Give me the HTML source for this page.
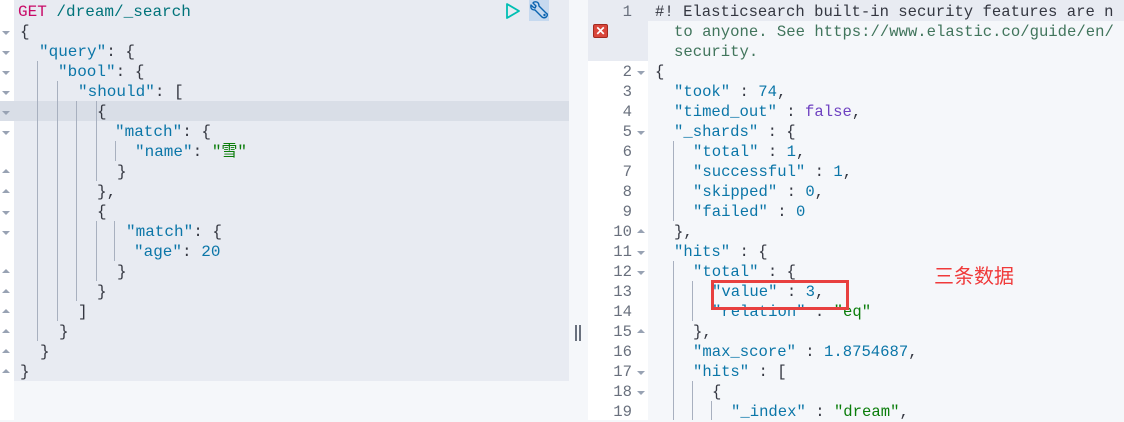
<!DOCTYPE html>
<html><head><meta charset="utf-8"><style>
*{margin:0;padding:0;box-sizing:border-box}
body{width:1124px;height:420px;overflow:hidden;background:#f5f7fa;position:relative;font-family:"Liberation Mono","Noto Sans CJK SC",monospace}
.a{position:absolute;white-space:pre;line-height:20px;height:20px;margin-top:1px}
.L{font-size:16px}
.R{font-size:15.6px}
.k{color:#0b76a8}.s{color:#0a7d0a}.n{color:#0b76a8}.p{color:#343741}.b{color:#6f42c1}
.g{position:absolute;width:1px;background:#a8b0bf}
.ln{position:absolute;left:588px;width:44px;text-align:right;font-size:15.6px;color:#69707d;line-height:20px;margin-top:1px;font-family:"Liberation Mono",monospace}
.tu,.td{position:absolute;width:0;height:0;border-left:4px solid transparent;border-right:4px solid transparent}
.td{border-top:4px solid #98a2b3}.tu{border-bottom:4px solid #98a2b3}
</style></head><body>
<div style="position:absolute;left:0;top:0;width:14px;height:420px;background:#fff"></div>
<div style="position:absolute;left:14px;top:0;width:555px;height:381px;background:#e8ebf2"></div>
<div style="position:absolute;left:0;top:101px;width:569px;height:20px;background:#d9dee7"></div>
<div style="position:absolute;left:529px;top:0;width:20px;height:21px;background:#c6d9ef"></div>
<svg style="position:absolute;left:505px;top:2px" width="16" height="18"><path d="M2 2 L14 9 L2 16 Z" fill="none" stroke="#00bfb3" stroke-width="1.8" stroke-linejoin="round"/></svg>
<svg style="position:absolute;left:530px;top:1px" width="19" height="19" viewBox="0 0 19 19"><path d="M3 2 L6 5 L5 7 L3 6 L1 4 Q0 9 5 9 L12 16 Q15 18 17 15 Q18 13 16 12 L9 5 Q9 0 4 1 Z" fill="none" stroke="#0b64b0" stroke-width="1.4" stroke-linejoin="round"/><circle cx="14.5" cy="14" r="1.2" fill="#0b64b0"/></svg>

<div class="g" style="left:37px;top:61px;height:280px"></div>
<div class="g" style="left:57px;top:81px;height:240px"></div>
<div class="g" style="left:76px;top:101px;height:200px"></div>
<div class="g" style="left:96px;top:101px;height:80px"></div>
<div class="g" style="left:115px;top:141px;height:20px"></div>
<div class="g" style="left:96px;top:221px;height:60px"></div>
<div class="g" style="left:114px;top:221px;height:40px"></div>

<div class="a L" style="left:18px;top:1px"><span style="color:#c80a68">GET</span> <span style="color:#00737a">/dream/_search</span></div>
<div class="a L p" style="left:20px;top:21px">{</div>
<div class="a L" style="left:39px;top:41px"><span class="k">"query"</span><span class="p">: {</span></div>
<div class="a L" style="left:58px;top:61px"><span class="k">"bool"</span><span class="p">: {</span></div>
<div class="a L" style="left:78px;top:81px"><span class="k">"should"</span><span class="p">: [</span></div>
<div class="a L p" style="left:97px;top:101px">{</div>
<div class="a L" style="left:115px;top:121px"><span class="k">"match"</span><span class="p">: {</span></div>
<div class="a L" style="left:135px;top:141px"><span class="k">"name"</span><span class="p">: </span><span class="s">"雪"</span></div>
<div class="a L p" style="left:117px;top:161px">}</div>
<div class="a L p" style="left:97px;top:181px">},</div>
<div class="a L p" style="left:97px;top:201px">{</div>
<div class="a L" style="left:126px;top:221px"><span class="k">"match"</span><span class="p">: {</span></div>
<div class="a L" style="left:134px;top:241px"><span class="k">"age"</span><span class="p">: </span><span class="n">20</span></div>
<div class="a L p" style="left:117px;top:261px">}</div>
<div class="a L p" style="left:97px;top:281px">}</div>
<div class="a L p" style="left:78px;top:301px">]</div>
<div class="a L p" style="left:59px;top:321px">}</div>
<div class="a L p" style="left:40px;top:341px">}</div>
<div class="a L p" style="left:20px;top:361px">}</div>

<div class="td" style="left:2px;top:31px"></div><div class="td" style="left:2px;top:51px"></div><div class="td" style="left:2px;top:71px"></div><div class="td" style="left:2px;top:91px"></div><div class="td" style="left:2px;top:111px"></div><div class="td" style="left:2px;top:131px"></div>
<div class="tu" style="left:2px;top:169px"></div><div class="tu" style="left:2px;top:189px"></div>
<div class="td" style="left:2px;top:211px"></div><div class="td" style="left:2px;top:231px"></div>
<div class="tu" style="left:2px;top:269px"></div><div class="tu" style="left:2px;top:289px"></div><div class="tu" style="left:2px;top:309px"></div><div class="tu" style="left:2px;top:329px"></div><div class="tu" style="left:2px;top:349px"></div><div class="tu" style="left:2px;top:369px"></div>

<div style="position:absolute;left:575px;top:325px;width:2px;height:16px;background:#69707d"></div>
<div style="position:absolute;left:579px;top:325px;width:2px;height:16px;background:#69707d"></div>

<div style="position:absolute;left:588px;top:0;width:60px;height:420px;background:#fff"></div>
<div style="position:absolute;left:588px;top:0;width:60px;height:61px;background:#e8ebf2"></div>
<div style="position:absolute;left:648px;top:0;width:476px;height:21px;background:#e8ebf2"></div>
<div style="position:absolute;left:593px;top:24px;width:15px;height:14px;background:#d9463b;border:1px solid #a32a20;border-radius:2px;color:#fff;font:bold 12px/12px 'Liberation Sans',sans-serif;text-align:center">✕</div>

<div class="ln" style="top:1px">1</div>
<div class="ln" style="top:61px">2</div><div class="ln" style="top:81px">3</div><div class="ln" style="top:101px">4</div><div class="ln" style="top:121px">5</div><div class="ln" style="top:141px">6</div><div class="ln" style="top:161px">7</div><div class="ln" style="top:181px">8</div><div class="ln" style="top:201px">9</div><div class="ln" style="top:221px">10</div><div class="ln" style="top:241px">11</div><div class="ln" style="top:261px">12</div><div class="ln" style="top:281px">13</div><div class="ln" style="top:301px">14</div><div class="ln" style="top:321px">15</div><div class="ln" style="top:341px">16</div><div class="ln" style="top:361px">17</div><div class="ln" style="top:381px">18</div><div class="ln" style="top:401px">19</div>
<div class="td" style="left:637px;top:71px"></div><div class="td" style="left:637px;top:131px"></div><div class="tu" style="left:637px;top:229px"></div><div class="td" style="left:637px;top:251px"></div><div class="td" style="left:637px;top:271px"></div><div class="tu" style="left:637px;top:329px"></div><div class="td" style="left:637px;top:371px"></div><div class="td" style="left:637px;top:391px"></div>

<div class="g" style="left:673px;top:141px;height:80px"></div>
<div class="g" style="left:673px;top:261px;height:159px"></div>
<div class="g" style="left:692px;top:281px;height:40px"></div>
<div class="g" style="left:692px;top:381px;height:39px"></div>
<div class="g" style="left:711px;top:401px;height:19px"></div>

<div style="position:absolute;left:648px;top:0;width:476px;height:61px;overflow:hidden">
<div class="a R" style="left:7px;top:1px;color:#343741">#! Elasticsearch built-in security features are n</div>
<div class="a R" style="left:26px;top:21px;color:#41755c">to anyone. See https://www.elastic.co/guide/en/</div>
<div class="a R" style="left:26px;top:41px;color:#41755c">security.</div>
</div>
<div class="a R p" style="left:655px;top:61px">{</div>
<div class="a R" style="left:674px;top:81px"><span class="k">"took"</span><span class="p"> : </span><span class="n">74</span><span class="p">,</span></div>
<div class="a R" style="left:674px;top:101px"><span class="k">"timed_out"</span><span class="p"> : </span><span class="b">false</span><span class="p">,</span></div>
<div class="a R" style="left:674px;top:121px"><span class="k">"_shards"</span><span class="p"> : {</span></div>
<div class="a R" style="left:693px;top:141px"><span class="k">"total"</span><span class="p"> : </span><span class="n">1</span><span class="p">,</span></div>
<div class="a R" style="left:693px;top:161px"><span class="k">"successful"</span><span class="p"> : </span><span class="n">1</span><span class="p">,</span></div>
<div class="a R" style="left:693px;top:181px"><span class="k">"skipped"</span><span class="p"> : </span><span class="n">0</span><span class="p">,</span></div>
<div class="a R" style="left:693px;top:201px"><span class="k">"failed"</span><span class="p"> : </span><span class="n">0</span></div>
<div class="a R p" style="left:674px;top:221px">},</div>
<div class="a R" style="left:674px;top:241px"><span class="k">"hits"</span><span class="p"> : {</span></div>
<div class="a R" style="left:693px;top:261px"><span class="k">"total"</span><span class="p"> : {</span></div>
<div class="a R" style="left:712px;top:281px"><span class="k">"value"</span><span class="p"> : </span><span class="n">3</span><span class="p">,</span></div>
<div class="a R" style="left:712px;top:301px"><span class="k">"relation"</span><span class="p"> : </span><span class="s">"eq"</span></div>
<div class="a R p" style="left:693px;top:321px">},</div>
<div class="a R" style="left:693px;top:341px"><span class="k">"max_score"</span><span class="p"> : </span><span class="n">1.8754687</span><span class="p">,</span></div>
<div class="a R" style="left:693px;top:361px"><span class="k">"hits"</span><span class="p"> : [</span></div>
<div class="a R p" style="left:712px;top:381px">{</div>
<div class="a R" style="left:731px;top:401px"><span class="k">"_index"</span><span class="p"> : </span><span class="s">"dream"</span><span class="p">,</span></div>

<div style="position:absolute;left:711px;top:280px;width:138px;height:30px;border:3px solid #e8403f"></div>
<div style="position:absolute;left:934px;top:263px;font:20px/24px 'Noto Sans CJK SC',sans-serif;color:#f03a3a">三条数据</div>
</body></html>
